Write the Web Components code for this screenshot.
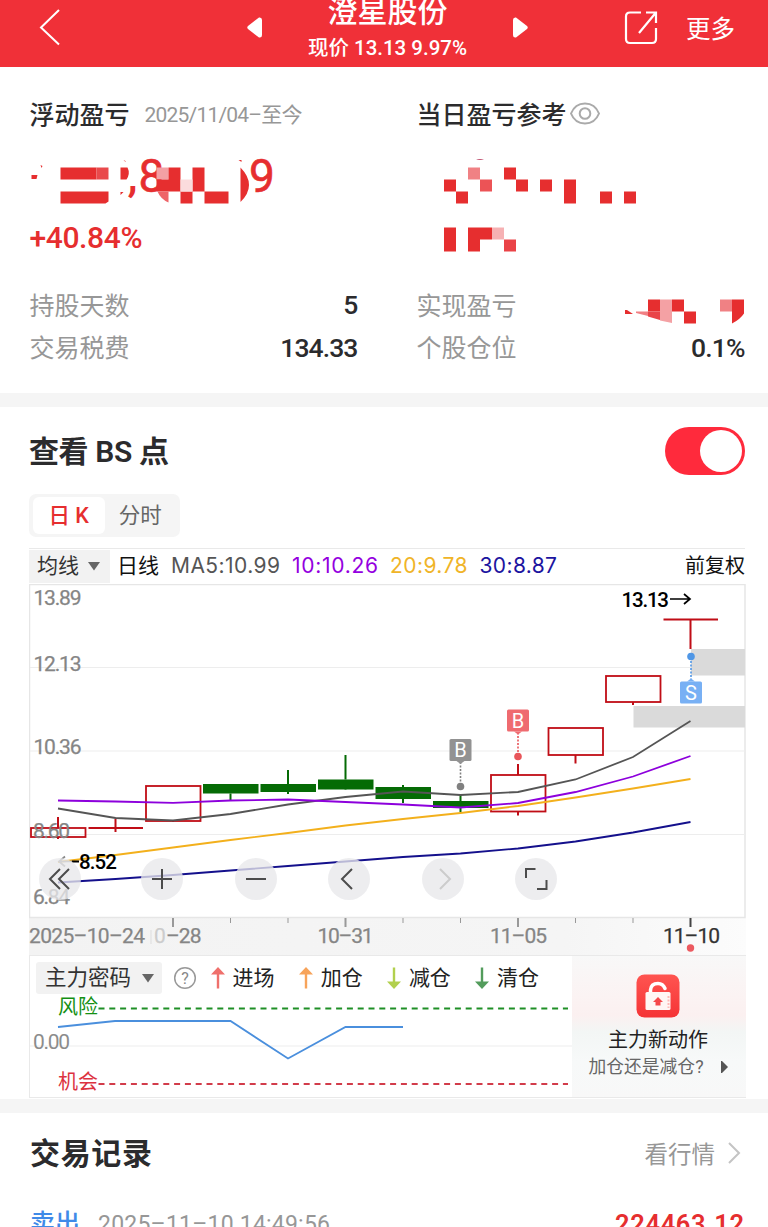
<!DOCTYPE html>
<html lang="zh-CN">
<head>
<meta charset="utf-8" />
<meta name="viewport" content="width=device-width, initial-scale=1.0" />
<title>澄星股份</title>

<style>
  body {
    margin: 0;
    height: 1227px;
    overflow: hidden;
    background: #fff;
    color: #2b2b2d;
    font-family: Roboto, "Noto Sans CJK SC", sans-serif;
    --red: #e62e2f;
    --grey: #979797;
  }
</style>

<template id="app-header-template">
  <style>
    :host {
      display: grid;
      grid-template-columns: 243px 288px 1fr;
      height: 67px;
      overflow: hidden;
      background: #f03038;
      color: #fff;
    }
    .back {
      padding: 9px 0 0 38px;
    }
    .middle {
      display: flex;
      justify-content: space-between;
      padding: 0 3px 0 4px;
    }
    .middle > svg {
      margin-top: 17px;
    }
    .title {
      display: flex;
      flex-direction: column;
      align-items: center;
      margin-top: -10px;
    }
    h1 {
      margin: 0;
      font-size: 30px;
      font-weight: 500;
      line-height: 44px;
    }
    p {
      margin: 0;
      font-size: 20.500px;
      font-weight: 500;
      line-height: 28px;
    }
    .right {
      display: flex;
      justify-content: flex-end;
      gap: 28px;
      padding: 9px 33px 0 0;
      font-size: 24.500px;
      line-height: 41px;
    }
  </style>
  <div class="back">
    <svg width="24" height="38" viewBox="0 0 24 38" fill="none" stroke="#fff" stroke-width="2"><path d="M21 1 3 18.500 21 35.500" /></svg>
  </div>
  <div class="middle">
    <svg width="16" height="22" viewBox="0 0 16 22" fill="#fff"><path d="M1 9 12 .5Q15 0 15 3V18Q15 21 12 20.500L1 12Q-.5 10.500 1 9z" /></svg>
    <div class="title">
      <h1><fit-text width="120"><slot name="name"></slot></fit-text></h1>
      <p><fit-text width="159"><slot name="price"></slot></fit-text></p>
    </div>
    <svg width="16" height="22" viewBox="0 0 16 22" fill="#fff"><path d="M15 9 4 .5Q1 0 1 3V18Q1 21 4 20.500L15 12Q16.500 10.500 15 9z" /></svg>
  </div>
  <div class="right">
    <svg width="34" height="36" viewBox="0 0 34 36" fill="none" stroke="#fff" stroke-width="2.200"><path d="M17 3.500H6Q2 3.500 2 7.500V30Q2 34 6 34H28Q32 34 32 30V19M15 24 32 3.500M22 3.500H32V14" /></svg>
    <span>更多</span>
  </div>
</template>

<template id="profit-panel-template">
  <style>
    :host {
      display: block;
      width: 328px;
    }
    header {
      display: flex;
      align-items: center;
      height: 30px;
      font-size: 25px;
      font-weight: 500;
      line-height: 30px;
    }
    .hero {
      height: 132px;
    }
    .rows {
      display: grid;
      grid-auto-rows: 42.500px;
      margin-top: 23px;
    }
  </style>
  <header><slot name="head"></slot></header>
  <div class="hero"><slot name="hero"></slot></div>
  <div class="rows"><slot></slot></div>
</template>

<template id="stat-row-template">
  <style>
    :host {
      display: flex;
      justify-content: space-between;
      align-items: center;
      font-size: 25px;
      line-height: 42px;
    }
    .label {
      padding-top: 3px;
      color: var(--grey);
    }
    .value {
      display: flex;
      font-size: 26.500px;
      font-weight: 500;
      letter-spacing: -0.9px;
    }
  </style>
  <span class="label"></span>
  <span class="value"><slot></slot></span>
</template>

<template id="kline-tabs-template">
  <style>
    :host {
      display: flex;
      box-sizing: border-box;
      width: 151px;
      height: 43px;
      padding: 3px 4px;
      border-radius: 7px;
      background: #f5f5f5;
      font-size: 21.500px;
      line-height: 38px;
    }
    span {
      flex: 1;
      text-align: center;
      color: #666;
    }
    .on {
      border-radius: 6px;
      background: #fff;
      color: var(--red);
      font-weight: 500;
    }
  </style>
  <span class="on">日 K</span>
  <span>分时</span>
</template>

<template id="ma-bar-template">
  <style>
    :host {
      display: flex;
      align-items: center;
      box-sizing: border-box;
      height: 36px;
      padding-bottom: 1px;
      border-top: 1px solid #e9e9e9;
      font: 21px/34px Inter, "Noto Sans CJK SC", sans-serif;
    }
    .pick {
      display: flex;
      align-items: center;
      gap: 9px;
      box-sizing: border-box;
      width: 81px;
      height: 33px;
      padding-left: 8px;
      background: #f2f2f2;
      color: #333;
    }
    .day {
      margin: 0 12px 0 7px;
      color: #111;
    }
    .ma {
      display: flex;
      flex: 1;
      gap: 12px;
    }
    .adj {
      font-size: 20px;
      color: #111;
    }
  </style>
  <div class="pick">均线 <svg width="12" height="9" fill="#666"><path d="M0 0H12L6 8.500z" /></svg></div>
  <span class="day">日线</span>
  <div class="ma">
    <fit-text width="109" style="color:#555">MA5:10.99</fit-text>
    <fit-text width="86" style="color:#9400e0">10:10.26</fit-text>
    <fit-text width="77.500" style="color:#f0b428">20:9.78</fit-text>
    <fit-text width="77.500" style="color:#1c14a0">30:8.87</fit-text>
  </div>
  <span class="adj">前复权</span>
</template>

<template id="kline-chart-template">
  <style>
    :host {
      display: block;
      position: relative;
      height: 371px;
    }
    svg {
      display: block;
    }
    text {
      font-weight: 500;
    }
    .axis text {
      font-size: 21px;
      font-weight: 400;
      stroke: currentColor;
      stroke-width: 0.25px;
    }
    .axis {
      fill: #858585;
      color: #858585;
    }
    .flag {
      font-weight: 400;
    }
    .tools {
      position: absolute;
      left: 9.500px;
      top: 274px;
      display: flex;
      gap: 51.600px;
    }
    .tools span {
      width: 42px;
      height: 42px;
      border-radius: 50%;
      background: rgba(232, 232, 234, 0.78);
    }
    .tools span:first-child {
      margin-right: 9px;
    }
    .tools path {
      fill: none;
      stroke: #4c4c4c;
      stroke-width: 2;
    }
    .tools .off path {
      stroke: #ccc;
    }
  </style>
  <svg id="plot" width="717" height="371" viewBox="29 584 717 371"></svg>
  <div class="tools">
    <span><svg width="42" height="42"><path d="M21 11 11 21 21 31M30 11 20 21 30 31" /></svg></span>
    <span><svg width="42" height="42"><path d="M11 21H31M21 11V31" /></svg></span>
    <span><svg width="42" height="42"><path d="M11 21H31" /></svg></span>
    <span><svg width="42" height="42"><path d="M24 11 14 21 24 31" /></svg></span>
    <span class="off"><svg width="42" height="42"><path d="M18 11 28 21 18 31" /></svg></span>
    <span><svg width="42" height="42"><path d="M11 20V11H20.500M22 31H31.500V22" /></svg></span>
  </div>
</template>

<template id="signal-panel-template">
  <style>
    :host {
      display: grid;
      grid-template-columns: 1fr 174px;
      box-sizing: border-box;
      height: 143px;
      border: 1px solid #e9e9e9;
    }
    .left {
      display: flex;
      flex-direction: column;
    }
    .legend {
      display: flex;
      align-items: center;
      padding: 6px 0 0 6px;
      height: 32px;
      font-size: 21px;
      line-height: 32px;
      color: #222;
    }
    .pick {
      display: flex;
      align-items: center;
      justify-content: space-between;
      box-sizing: border-box;
      width: 126px;
      height: 32px;
      padding: 0 8px 0 9px;
      margin-right: 11px;
      border-radius: 3px;
      background: #f2f2f2;
      font-size: 21.500px;
      color: #333;
    }
    .arrow {
      margin: 0 8px 0 13.500px;
    }
    .arrow + span {
      width: 42px;
      margin-right: 10.700px;
    }
    svg {
      display: block;
    }
  </style>
  <div class="left">
    <div class="legend">
      <span class="pick">主力密码 <svg width="12" height="9" fill="#666"><path d="M0 0H12L6 8.500z" /></svg></span>
      <svg width="24" height="24" viewBox="0 0 24 24"><circle cx="12" cy="12" r="10.300" fill="none" stroke="#999" stroke-width="1.500" /><text x="12" y="17.500" font-size="16" text-anchor="middle" fill="#888">?</text></svg>
    </div>
    <svg id="plot" width="542" height="103" viewBox="30 994 542 103"></svg>
  </div>
  <slot></slot>
</template>

<template id="promo-card-template">
  <style>
    :host {
      display: flex;
      flex-direction: column;
      align-items: center;
      padding: 18px 2px 0 0;
      background: linear-gradient(#f8f8f8 0%, #fbf3f3 28%, #fbf0f0 42%, #f3f6f5 54%, #f7f9f9 75%, #f8f8f8 100%);
      color: #222;
    }
    b {
      margin-top: 9px;
      font-size: 20px;
      font-weight: 400;
      line-height: 26px;
    }
    p {
      display: flex;
      align-items: center;
      gap: 17px;
      margin: 0;
      font-size: 17.800px;
      line-height: 28px;
      color: #666;
    }
  </style>
  <svg width="44" height="44" viewBox="0 0 44 44">
    <defs><linearGradient id="g" x2="0" y2="1"><stop stop-color="#ff5450" /><stop offset="1" stop-color="#f53436" /></linearGradient></defs>
    <rect x=".5" y=".5" width="43" height="43" rx="8" fill="url(#g)" />
    <path d="M14.500 19V16Q15 9.500 22 9.500Q27 9.500 29 14.500" fill="none" stroke="#fff" stroke-width="3.500" stroke-linecap="round" />
    <rect x="9.500" y="18" width="25" height="18" rx="1.500" fill="#fff6f4" />
    <path d="M22 23 27 28H24.500V31.500H19.500V28H17z" fill="#f5484a" />
    <path d="M32.500 22V34" stroke="#ffb9b5" stroke-width="2" stroke-dasharray="2 1.500" />
  </svg>
  <b>主力新动作</b>
  <p><span>加仓还是减仓?</span><svg width="7" height="12" fill="#555"><path d="M0 0H1L7 6 1 12H0z" /></svg></p>
</template>

<template id="trade-row-template">
  <style>
    :host {
      display: flex;
      align-items: center;
      height: 34px;
      font-size: 23px;
      line-height: 34px;
    }
    .side {
      width: 68px;
      font-size: 25px;
      font-weight: 500;
      color: #3f8ae8;
    }
    .time {
      flex: 1;
      padding-top: 2px;
      color: var(--grey);
    }
    .sum {
      font-size: 25.500px;
      font-weight: 600;
      color: var(--red);
    }
  </style>
  <span class="side"><slot name="side"></slot></span>
  <span class="time"><slot name="time"></slot></span>
  <span class="sum"><slot name="sum"></slot></span>
</template>

<style>
  .summary {
    display: grid;
    grid-template-columns: 387px 1fr;
    box-sizing: border-box;
    height: 326px;
    padding: 32px 0 0 29.500px;
  }
  .summary svg {
    display: block;
  }
  .summary [slot="head"] {
    padding-top: 3px;
  }
  .summary .since {
    margin-left: 15px;
    padding-top: 1px;
    font-size: 21px;
    font-weight: 400;
    color: var(--grey);
  }
  .summary .eye {
    margin-left: 3px;
    padding-top: 0;
  }
  .rate {
    margin-top: 15px;
    font-size: 30px;
    font-weight: 500;
    line-height: 36px;
    color: var(--red);
  }
  .gap {
    height: 14px;
    background: #f5f5f5;
  }
  .bs {
    box-sizing: border-box;
    height: 692px;
    padding: 20px 22px 0 29px;
  }
  .bar {
    display: flex;
    align-items: center;
    justify-content: space-between;
  }
  h2 {
    margin: 0;
    font-size: 30px;
    font-weight: 600;
    line-height: 50px;
    height: 48px;
  }
  .switch {
    box-sizing: border-box;
    width: 80px;
    height: 48px;
    margin-right: 1px;
    padding: 3px;
    border-radius: 24px;
    background: #ff2a3c;
  }
  .switch i {
    display: block;
    width: 42px;
    height: 42px;
    margin-left: auto;
    border-radius: 50%;
    background: #fff;
  }
  kline-tabs {
    margin: 19px 0 11px;
  }
  ma-bar {
    margin-right: 1px;
  }
  .trades {
    padding: 16px 24px 0 30px;
  }
  .trades trade-row {
    margin-top: 30px;
  }
  .more {
    display: flex;
    align-items: center;
    gap: 12px;
    margin-right: 3px;
    font-size: 23.500px;
    color: var(--grey);
  }
</style>
</head>
<body>

  <app-header>
    <span slot="name">澄星股份</span>
    <span slot="price">现价 13.13 9.97%</span>
  </app-header>

  <div class="summary">
    <profit-panel>
      <span slot="head">浮动盈亏</span>
      <fit-text slot="head" class="since" width="158">2025/11/04–至今</fit-text>
      <div slot="hero">
        <svg width="260" height="76" viewBox="29.500 129 260 76" fill="#e62e2f">
          <path d="M31 175h6l-1 4h-5zM40 165l2 1-1 2zM60 167.500h36v12h-36zM60 191.500h48v10l-3 2H60zM120 167.500h7q3 6 -1 12h-6zM123 160l2 1v1zM120 192h3l-3 3z" />
          <path d="M96 167.500h12v12h-12z" fill="#e94a4c" />
          <text x="127" y="191" font-size="45" font-weight="500">,</text>
          <text x="138" y="192" font-size="46" font-weight="400" stroke="#e62e2f" stroke-width=".6">8</text>
          <path d="M156 167.500h12v12h-12z" fill="#f3a0a4" />
          <path d="M156 179.500h12v-12h12v24h-24zM192 167.500h12v24h-12zM180 191.500h12v12h-12zM204 191.500h24v12h-24zM240 167.500Q257 185 240 202zM238 160h3v2z" />
          <path d="M157 191.500h11v11Q160 199 157 191.500z" fill="#ee6468" />
          <path d="M180 179.500h12v12h-12z" fill="#fbdcdd" />
          <text x="248.500" y="192" font-size="46" font-weight="400" stroke="#e62e2f" stroke-width=".6">9</text>
        </svg>
        <div class="rate"><fit-text width="113">+40.84%</fit-text></div>
      </div>
      <stat-row label="持股天数">5</stat-row>
      <stat-row label="交易税费">134.33</stat-row>
    </profit-panel>

    <profit-panel>
      <span slot="head">当日盈亏参考</span>
      <svg slot="head" class="eye" width="30" height="24" fill="none" stroke="#aaa" stroke-width="2"><path d="M1 11.500Q5 1.500 15 1.500T29 11.500Q25 21.500 15 21.500T1 11.500z" /><circle cx="15" cy="11.500" r="5.300" /></svg>
      <svg slot="hero" width="328" height="132" viewBox="417 129 328 132" fill="#e62e2f">
        <path d="M444 179.500h12v12h12v12h-12v-12h-12zM504 167.500h12v12h12v12h-12v-12h-12zM540 179.500h12v12h-12zM564 179.500h12v24h-12zM600 191.500h12v12h-12zM624 191.500h12v12h-12zM444 227.500h12v24h-12zM468 227.500h24v12h-12v12h-12z" />
        <path d="M476 160q4 -2 8 0z" fill="#c05070" />
        <path d="M468 167.500h12v12h-12z" fill="#f08184" />
        <path d="M480 179.500h12v12h-12z" fill="#ec5356" />
        <path d="M492 227.500h12v12h-12z" fill="#f6b1b3" />
        <path d="M504 239.500h12v12h-12z" fill="#ea4347" />
      </svg>
      <stat-row label="实现盈亏">
        <svg width="121" height="36" viewBox="624 287 121 36" fill="#e62e2f" overflow="visible">
          <path d="M625 310l2 0 6 4h-8zM648 299.500h12v12h-12zM672 299.500h12v12h12v12h-12v-12h-12zM732 299.500h12v14q-4 6 -12 10z" />
          <path d="M636 311.500h12v4.500l-12 -3z" fill="#f18084" />
          <path d="M648 311.500h12v8.500l-12 -3.500z" fill="#e94448" />
          <path d="M660 299.500h12v23.500l-12 -2.500z" fill="#f4a1a4" />
          <path d="M720 299.500h12v12h-12z" fill="#f08184" />
        </svg>
      </stat-row>
      <stat-row label="个股仓位">0.1%</stat-row>
    </profit-panel>
  </div>

  <div class="gap"></div>

  <div class="bs">
    <div class="bar">
      <h2><fit-text width="140">查看 BS 点</fit-text></h2>
      <div class="switch"><i></i></div>
    </div>
    <kline-tabs></kline-tabs>
    <ma-bar></ma-bar>
    <kline-chart></kline-chart>
    <signal-panel><promo-card></promo-card></signal-panel>
  </div>

  <div class="gap"></div>

  <div class="trades">
    <div class="bar">
      <h2><fit-text width="122">交易记录</fit-text></h2>
      <span class="more">看行情 <svg width="14" height="24" fill="none" stroke="#c4c4c4" stroke-width="2"><path d="M2 2 12 12 2 22" /></svg></span>
    </div>
    <trade-row>
      <span slot="side">卖出</span>
      <fit-text slot="time" width="232">2025–11–10 14:49:56</fit-text>
      <fit-text slot="sum" width="129">224463.12</fit-text>
    </trade-row>
  </div>

<script>

  // Base class: clones the template named after the element into its shadow root
  class TemplateElement extends HTMLElement {
    constructor() {
      super();
      const template = document.querySelector('#' + this.localName + '-template');
      this._shadow = this.attachShadow({mode: 'open'});
      this._shadow.appendChild(template.content.cloneNode(true));
    }
  }

  // Spreads its text over the given width with letter-spacing
  class FitText extends HTMLElement {
    constructor() {
      super();
      this._shadow = this.attachShadow({mode: 'open'});
      this._shadow.innerHTML = '<style>:host{display:inline-block;white-space:nowrap}</style><span><slot></slot></span>';
    }

    connectedCallback() {
      requestAnimationFrame(() => this.fit());
    }

    fit() {
      const span = this._shadow.querySelector('span');
      const width = Number(this.getAttribute('width'));
      const slot = this.querySelector('slot');
      const text = slot ? slot.assignedNodes()[0].textContent : this.textContent;
      span.style.letterSpacing = (width - span.getBoundingClientRect().width) / (text.length - 1) + 'px';
      this.style.width = width + 'px';
    }
  }

  class StatRow extends TemplateElement {
    static get observedAttributes() {
      return ['label'];
    }

    attributeChangedCallback(name, oldVal, newVal) {
      this._shadow.querySelector('.label').textContent = newVal;
    }
  }

  const dayX = i => 58 + i * 57.5;
  const line = (points, color, width = 1.8) =>
    `<polyline points="${points}" fill="none" stroke="${color}" stroke-width="${width}" />`;

  // [body top, body bottom, high, low, direction]
  const candles = [
    [828, 837, 817, 839, 'up'],
    [828, 828, 819, 832, 'up'],
    [786, 821, 786, 822, 'up'],
    [784, 793.5, 784, 800, 'down'],
    [784, 792, 770, 794, 'down'],
    [779.5, 789.5, 755, 790, 'down'],
    [787, 799, 785, 803, 'down'],
    [801, 808, 794, 812, 'down'],
    [775, 811.5, 764, 815.5, 'up'],
    [728, 755, 728, 763.5, 'up'],
    [676, 702, 676, 705, 'up'],
    [619.5, 619.5, 619, 649, 'up']
  ];

  const averages = [
    ['#555', [808.5, 818, 820.5, 814, 804.5, 797, 791.5, 795, 792, 779.5, 757, 721]],
    ['#8d00dc', [800.5, 801.5, 802.8, 800.5, 799.5, 802, 804.5, 807.5, 803, 792, 776.5, 756]],
    ['#f3b01c', [862, 855, 847.5, 840, 833, 825.5, 819, 813, 806, 797.5, 788.5, 779]],
    ['#14108c', [882.5, 879, 875, 870.5, 866, 861.5, 857, 853.5, 848.5, 841.5, 832.5, 822]]
  ];

  class KlineChart extends TemplateElement {
    connectedCallback() {
      this._shadow.querySelector('#plot').innerHTML =
        this.frame() + candles.map(this.candle).join('') +
        averages.map(([color, ys]) => line(ys.map((y, i) => dayX(i) + ',' + y).join(' '), color)).join('') +
        this.marker(460.5, 750, 786.5, 'B', '#929292', '#808080') +
        this.marker(518, 720.5, 756.5, 'B', '#ef6b70', '#e8555a') +
        this.marker(691, 692.5, 656.5, 'S', '#78b0f4', '#5097e6') +
        this.labels();
    }

    frame() {
      const ticks = candles.map((c, i) => i < 2 ? '' :
        `<path d="M${dayX(i)} 918v${(i + 1) % 3 ? 5 : 9}" stroke="${i === 11 ? '#444' : '#999'}" stroke-width="${(i + 1) % 3 ? 1 : 2}" />`);
      return `
        <defs><linearGradient id="strip"><stop stop-color="#f3f3f3" /><stop offset=".75" stop-color="#f5f5f5" /><stop offset="1" stop-color="#fcfcfc" /></linearGradient></defs>
        <rect x="29" y="918" width="717" height="37" fill="url(#strip)" />
        <rect x="29.5" y="584.5" width="715.5" height="333" fill="#fff" stroke="#e6e6e6" stroke-width="1.500" />
        <path d="M30 667.500H745M30 751H745M30 834.500H745" stroke="#ededed" stroke-width="1.200" />
        <path d="M691 649h54v26.500h-54zM633.500 706h111.500v21.500h-111.500z" fill="#dadada" />` + ticks.join('');
    }

    candle([top, bottom, high, low, dir], i) {
      const x = dayX(i);
      const color = dir === 'up' ? '#c00d16' : '#056b05';
      const wick = `<path d="M${x} ${high}V${top}M${x} ${bottom}V${low}" stroke="${color}" stroke-width="2" />`;
      if (dir === 'down') {
        return wick + `<rect x="${x - 27.5}" y="${top}" width="55.5" height="${bottom - top}" fill="${color}" />`;
      }
      if (top === bottom) {
        return wick + `<path d="M${x - 27} ${top}h54.500" stroke="${color}" stroke-width="2.200" />`;
      }
      return wick + `<rect x="${x - 27}" y="${top}" width="54.5" height="${bottom - top}" fill="none" stroke="${color}" stroke-width="1.800" />`;
    }

    // Buy / sell flag with a dotted leader to its dot
    marker(x, y, dotY, letter, fill, dot) {
      const dir = dotY > y ? 1 : -1;
      return `
        <path d="M${x} ${y + dir * 12}V${dotY}" stroke="${dot}" stroke-width="1.600" stroke-dasharray="2 1.500" />
        <circle cx="${x}" cy="${dotY}" r="3.800" fill="${dot}" />
        <rect x="${x - 11}" y="${y - 11}" width="22" height="22" rx="1.500" fill="${fill}" />
        <path d="M${x - 4} ${y + dir * 11}h8l-4 ${dir * 3}z" fill="${fill}" />
        <text class="flag" x="${x}" y="${y + 7}" font-size="20" text-anchor="middle" fill="#fff">${letter}</text>`;
    }

    labels() {
      return `
        <g class="axis">
          <text x="33.5" y="605" textLength="48">13.89</text>
          <text x="33.5" y="670.500" textLength="48">12.13</text>
          <text x="33.5" y="753.500" textLength="48">10.36</text>
          <text x="33" y="837.500" textLength="37">8.60</text>
          <text x="33" y="903.500" textLength="37">6.84</text>
          <text x="29" y="943" textLength="116">2025–10–24</text>
          <text x="154" y="943" textLength="13" opacity=".35">0</text>
          <text x="166" y="943" textLength="35.5">–28</text>
          <text x="317.5" y="943" textLength="56">10–31</text>
          <text x="490" y="943" textLength="57">11–05</text>
          <text x="663" y="943" textLength="57" fill="#333" color="#333">11–10</text>
        </g>
        <path d="M151 930v14" stroke="#ddd" />
        <circle cx="690.500" cy="948" r="3.700" fill="#ec5a60" />
        <text x="621.5" y="607" font-size="20.500" textLength="47.5" fill="#000">13.13</text>
        <path d="M670 599H690M684 594l6 5 -6 5" fill="none" stroke="#000" stroke-width="1.700" />
        <path d="M59 861.500H73M65 856.500l-6 5 6 5" fill="none" stroke="#888" stroke-width="1.700" />
        <path d="M72 861.500h7" stroke="#000" stroke-width="2" />
        <text x="79" y="869" font-size="20.500" textLength="38" fill="#000">8.52</text>`;
    }
  }

  const signals = [
    ['进场', '#ef706c', 'up'],
    ['加仓', '#f7a35a', 'up'],
    ['减仓', '#b2d04e', 'down'],
    ['清仓', '#539c5c', 'down']
  ];

  class SignalPanel extends TemplateElement {
    connectedCallback() {
      const legend = this._shadow.querySelector('.legend');
      legend.insertAdjacentHTML('beforeend', signals.map(([name, color, dir]) => `
        <svg class="arrow" width="14" height="22" fill="${color}"><path d="M7 0 14 7.500H8.200V21.500H5.800V7.500H0z" ${dir === 'down' ? 'transform="matrix(1 0 0 -1 0 22)"' : ''} /></svg><span>${name}</span>`).join(''));

      this._shadow.querySelector('#plot').innerHTML = `
        <path d="M30 1046H572" stroke="#ededed" stroke-width="1.200" />
        <path d="M98.500 1008.500H568" stroke="#1f8f26" stroke-width="1.800" stroke-dasharray="6 4.800" />
        <path d="M98.500 1084H568" stroke="#d23c4a" stroke-width="1.800" stroke-dasharray="6 4.800" />
        <text x="58" y="1013.500" font-size="20" fill="#149014">风险</text>
        <text x="58" y="1089" font-size="20" fill="#dc3240">机会</text>
        <text x="33" y="1049" font-size="21" textLength="37" fill="#8c8c8c">0.00</text>` +
        line('58,1027 115,1021 230.500,1021 288,1058.500 345.500,1027 403,1027', '#4a8fdd');
    }
  }

  customElements.define('app-header', class extends TemplateElement {});
  customElements.define('fit-text', FitText);
  customElements.define('profit-panel', class extends TemplateElement {});
  customElements.define('stat-row', StatRow);
  customElements.define('kline-tabs', class extends TemplateElement {});
  customElements.define('ma-bar', class extends TemplateElement {});
  customElements.define('kline-chart', KlineChart);
  customElements.define('signal-panel', SignalPanel);
  customElements.define('promo-card', class extends TemplateElement {});
  customElements.define('trade-row', class extends TemplateElement {});
</script>

</body>
</html>
